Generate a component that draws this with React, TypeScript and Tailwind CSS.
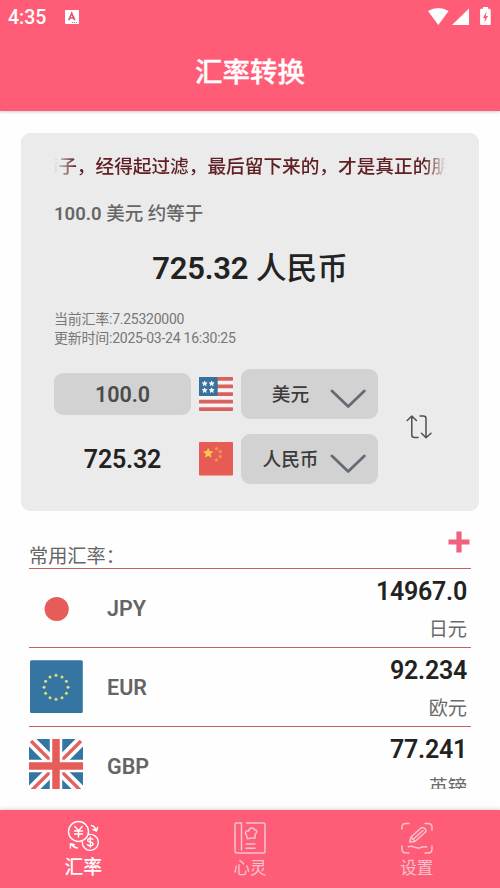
import type { ReactNode } from "react";

const star = "M0,-1 L.235,-.324 L.951,-.309 L.38,.124 L.588,.809 L0,.4 L-.588,.809 L-.38,.124 L-.951,-.309 L-.235,-.324 Z";

function Star({ x, y, r, fill }: { x: number; y: number; r: number; fill: string }) {
  return <path d={star} transform={`translate(${x} ${y}) scale(${r})`} fill={fill} stroke={fill} strokeWidth=".25" strokeLinejoin="round" />;
}

function UsFlag() {
  return (
    <svg viewBox="0 0 34 34" className="h-[34px] w-[34px]">
      <rect width="34" height="34" rx="1" fill="#f5f3f3" />
      {[0, 7.6, 15.2, 22.8, 30.2].map((y) => (
        <rect key={y} y={y} width="34" height="3.7" rx=".6" fill="#d9625f" />
      ))}
      <rect width="18.7" height="19" rx="1" fill="#38719b" />
      {[[5.7, 6.6], [12.7, 6.6], [5.7, 13.4], [12.7, 13.4]].map(([x, y]) => (
        <Star key={`${x}${y}`} x={x} y={y} r={2.6} fill="#fff" />
      ))}
    </svg>
  );
}

function CnFlag() {
  return (
    <svg viewBox="0 0 34 34" className="h-[34px] w-[34px]">
      <rect width="34" height="33.5" rx="1" fill="#e65c55" />
      <Star x={9.2} y={11.2} r={4.4} fill="#f7c94f" />
      {[[17.5, 6.6], [21.2, 9.6], [21.2, 14.5], [17.5, 18]].map(([x, y]) => (
        <Star key={`${x}${y}`} x={x} y={y} r={1.8} fill="#f2a04d" />
      ))}
    </svg>
  );
}

function JpFlag() {
  return (
    <svg viewBox="0 0 54 54" className="h-[54px] w-[54px]">
      <circle cx="27.7" cy="28" r="12.1" fill="#e65c58" />
    </svg>
  );
}

function EuFlag() {
  return (
    <svg viewBox="0 0 54 54" className="h-[54px] w-[54px]">
      <rect x="1" y=".2" width="52.8" height="52.8" rx="1.5" fill="#3575a2" />
      {Array.from({ length: 12 }, (_, i) => {
        const a = (i * Math.PI) / 6;
        return <circle key={i} cx={27 + 12 * Math.sin(a)} cy={27.3 - 12 * Math.cos(a)} r={1.5} fill="#e3dc78" />;
      })}
    </svg>
  );
}

function UkFlag() {
  return (
    <svg viewBox="0 0 54 54" className="h-[54px] w-[54px]">
      <rect width="54" height="54" rx="1" fill="#3575a2" />
      <path d="M0 0L54 54M54 0L0 54" stroke="#fff" strokeWidth="10.5" />
      <path d="M2 2L22 22M32 32L53 53M52 2L32 22M22 32L1 53" stroke="#e2615e" strokeWidth="3.4" />
      <path d="M27 0V54M0 27H54" stroke="#fff" strokeWidth="12.5" />
      <path d="M27 0V54M0 27H54" stroke="#e65c58" strokeWidth="7.5" />
    </svg>
  );
}

function Select({ label }: { label: string }) {
  return (
    <div className="flex h-[50px] w-[137px] items-center rounded-[9px] bg-[#d2d2d2]">
      <span className="w-[99px] pt-[2px] text-center text-[18.7px] font-medium text-[#3b3b3b]">{label}</span>
      <svg viewBox="0 0 36 20" className="mt-[10px] -ml-[10px] h-5 w-9 shrink-0" fill="none" stroke="#656b76" strokeWidth="2.8" strokeLinecap="round" strokeLinejoin="round">
        <path d="M2 2L18.2 17.5L34.3 2" />
      </svg>
    </div>
  );
}

function RateRow({ flag, code, rate, name }: { flag: ReactNode; code: string; rate: string; name: string }) {
  return (
    <div className="flex h-[79px] shrink-0 border-b border-[#c9605f] pr-1 last:border-b-0">
      <div className="pt-[12px]">{flag}</div>
      <span className="ml-[24px] pt-[26px] text-[21.5px] leading-[28px] font-semibold text-[#656565]">{code}</span>
      <div className="ml-auto flex flex-col items-end">
        <span className="mt-[6px] text-[25px] leading-[34px] font-semibold tracking-[-0.25px] text-[#222]">{rate}</span>
        <span className="mt-[7px] text-[19.2px] leading-[28px] text-[#6a6a6a]">{name}</span>
      </div>
    </div>
  );
}

function ExchangeIcon() {
  return (
    <svg viewBox="0 0 32 32" className="h-8 w-8" fill="none" stroke="#fff" strokeWidth="1.4" strokeLinecap="round" strokeLinejoin="round">
      <circle cx="11.5" cy="11.5" r="10" />
      <path d="M7.8 6.5L11.5 10.7L15.2 6.5M7.5 11H15.5M7.5 14H15.5M11.5 11V17" />
      <path d="M21.8 14.5A8 8 0 1 1 15.3 22" />
      <path d="M25.8 19.3C24.6 18 20.6 18 20.6 20.2C20.6 22.7 26 21.4 26 24C26 26.3 22 26.4 20.5 24.8M23.3 17V27" />
      <path d="M24.5 5.5C27 6 28.3 7.5 29 10.5M30.5 7.5L29.5 11L26 9.5M10.5 28C7.5 27.8 6 26.5 4.5 24.5M3.4 28V23.7L7.5 24.7" />
    </svg>
  );
}

function BookIcon() {
  return (
    <svg viewBox="0 0 32 32" className="h-8 w-8" fill="none" stroke="#f5c3ce" strokeWidth="1.5" strokeLinecap="round" strokeLinejoin="round">
      <path d="M7.5 28V1H2.5Q1 1 1 2.5V29Q1 31 3 31H29.5Q31 31 31 29.5V2.5Q31 1 29.5 1H12.5" />
      <path d="M13.2 16.7L12.5 12.8C10.4 11.4 11.8 8 14.8 9C15.2 5.2 20.2 5.4 20.5 7.9C23 7.5 23.4 10.7 21.3 12L20.8 16.2Q17 15.8 13.2 16.7ZM12 22H21M12 26.3H21" />
    </svg>
  );
}

function EditIcon() {
  return (
    <svg viewBox="0 0 32 32" className="h-8 w-8" fill="none" stroke="#f5c3ce" strokeWidth="1.5" strokeLinecap="round" strokeLinejoin="round">
      <path d="M1 7V5Q1 1.5 5 1.5H8M24 1.5H27Q31 1.5 31 5.5V8M31 24V27Q31 31 27 31H24M8 31H5Q1 31 1 27V24" />
      <path d="M8.7 20L10 15L20.3 5.7Q22.2 4.7 24.2 7Q25.7 9 24.3 10.3L14 19.5L8.7 20M10 15L14 19.5M12.8 16.8L22 8.5M7.3 24.7C12 22.8 14.5 27.2 19 25.7Q22.7 24.2 25.5 25" />
    </svg>
  );
}

export default function App() {
  return (
    <div className="flex h-[888px] w-[500px] flex-col overflow-hidden bg-[#fefefe] font-[Roboto,'Noto_Sans_CJK_SC',sans-serif]">
      <header className="z-10 h-[111px] shrink-0 bg-[#ff5c78] text-white shadow-[0_1px_3px_rgba(0,0,0,0.2)]">
        <div className="flex h-[34px] items-center pr-[9px] pl-[8px]">
          <span className="pt-[2px] text-[19.5px] leading-[34px] font-medium">4:35</span>
          <svg viewBox="0 0 14 14" className="ml-[19px] h-[14px] w-[14px]">
            <rect width="14" height="14" rx="1" fill="#fff" />
            <path d="M3.7 10.2L6.7 3.3L9.8 10.2M4.8 8H8.6" stroke="#db536c" strokeWidth="1.6" fill="none" />
            <path d="M6.8 12.5H12.5" stroke="#db536c" strokeDasharray="1 1" />
          </svg>
          <svg viewBox="0 0 64 20" className="mt-[-1px] ml-auto h-5 w-16" fill="#fff">
            <path d="M1 4Q11.3-2 21.6 4L11.3 18Z" />
            <path d="M42 1.5V18H25Z" />
            <path fillRule="evenodd" d="M54 1.7H56V0H61V1.7H62.6Q63.7 1.7 63.7 2.9V17Q63.7 18 62.7 18H54.1Q53.1 18 53.1 17V2.9Q53.1 1.7 54 1.7ZM59.4 4.5L56 11H57.9L57.5 15.6L61 9H59Z" />
          </svg>
        </div>
        <h1 className="mt-[20px] text-center text-[27.5px] leading-[38px] font-medium [-webkit-text-stroke:0.3px_#fff]">汇率转换</h1>
      </header>

      <main className="flex min-h-0 flex-1 flex-col">
        <section className="mx-[21px] mt-[22px] h-[378px] shrink-0 rounded-[9px] bg-[#ebebeb] px-[33px] pt-[20px]">
          <div className="flex h-[28px] w-[392px] overflow-hidden [mask-image:linear-gradient(to_right,transparent,black_22px,black_370px,transparent)]">
            <span className="-ml-[14.5px] shrink-0 text-[18.66px] leading-[28px] font-medium whitespace-nowrap text-[#602024]">筛子，经得起过滤，最后留下来的，才是真正的朋</span>
          </div>
          <p className="mt-[19px] text-[18.5px] leading-[28px] font-medium text-[#666]"><span className="font-semibold">100.0</span> 美元 约等于</p>
          <p className="mt-[19px] text-center text-[30.6px] leading-[44px] font-medium text-[#222]"><span className="text-[31px] font-semibold tracking-[-0.2px]">725.32</span> 人民币</p>
          <div className="mt-[19px] text-[14px] leading-[19px] tracking-[-0.25px] text-[#777]">
            <p>当前汇率:7.25320000</p>
            <p>更新时间:2025-03-24 16:30:25</p>
          </div>
          <div className="mt-[21px] flex items-center">
            <div className="flex flex-col gap-[15px]">
              <div className="flex h-[50px] items-center">
                <div className="w-[137px] rounded-[9px] bg-[#d2d2d2] pt-[2px] text-center text-[21.5px] leading-[40px] font-semibold text-[#4b4b4b]">100.0</div>
                <div className="mr-[8px] ml-[8px]"><UsFlag /></div>
                <Select label="美元" />
              </div>
              <div className="flex h-[50px] items-center">
                <div className="w-[137px] pt-[2px] text-center text-[25px] font-semibold tracking-[-0.2px] text-[#222]">725.32</div>
                <div className="mr-[8px] ml-[8px]"><CnFlag /></div>
                <Select label="人民币" />
              </div>
            </div>
            <svg viewBox="0 0 26 24" className="mt-px ml-[27.5px] h-6 w-[26px] shrink-0" fill="none" stroke="#505050" strokeWidth="1.5" strokeLinecap="round" strokeLinejoin="round">
              <path d="M1.2 5.5L5.8 1L10.4 5.5M5.8 1V20Q5.8 22.5 8.5 22.5H12M14 1H17.3Q20 1 20 3.5V22.5M15.5 18.2L20 22.7L25 18.2" />
            </svg>
          </div>
        </section>

        <section className="mx-[29px] mt-[17px] flex flex-col">
          <div className="flex h-[41px] justify-between border-b border-[#c9605f]">
            <h2 className="pt-[15px] text-[19.2px] leading-[28px] text-[#666]">常用汇率：</h2>
            <svg viewBox="0 0 22 22" className="mt-[3px] mr-px h-[22px] w-[22px]">
              <path d="M11 .5V21.5M.5 11H21.5" stroke="#ef617e" strokeWidth="5.2" />
            </svg>
          </div>
          <div className="flex h-[220px] flex-col overflow-hidden">
            <RateRow flag={<JpFlag />} code="JPY" rate="14967.0" name="日元" />
            <RateRow flag={<EuFlag />} code="EUR" rate="92.234" name="欧元" />
            <RateRow flag={<UkFlag />} code="GBP" rate="77.241" name="英镑" />
          </div>
        </section>
      </main>

      <nav className="grid h-[78px] shrink-0 grid-cols-3 bg-[#ff5c78] text-center shadow-[0_-1px_4px_rgba(0,0,0,0.16)]">
        <div className="flex flex-col items-center pt-[10px] text-[18.8px] leading-[28px] font-medium text-white">
          <ExchangeIcon />
          <span className="mt-[2px]">汇率</span>
        </div>
        <div className="flex flex-col items-center pt-[12px] text-[16.5px] leading-[24px] text-[#f5c3ce]">
          <BookIcon />
          <span className="mt-[3px]">心灵</span>
        </div>
        <div className="flex flex-col items-center pt-[12px] text-[16.5px] leading-[24px] text-[#f5c3ce]">
          <EditIcon />
          <span className="mt-[3px]">设置</span>
        </div>
      </nav>
    </div>
  );
}
